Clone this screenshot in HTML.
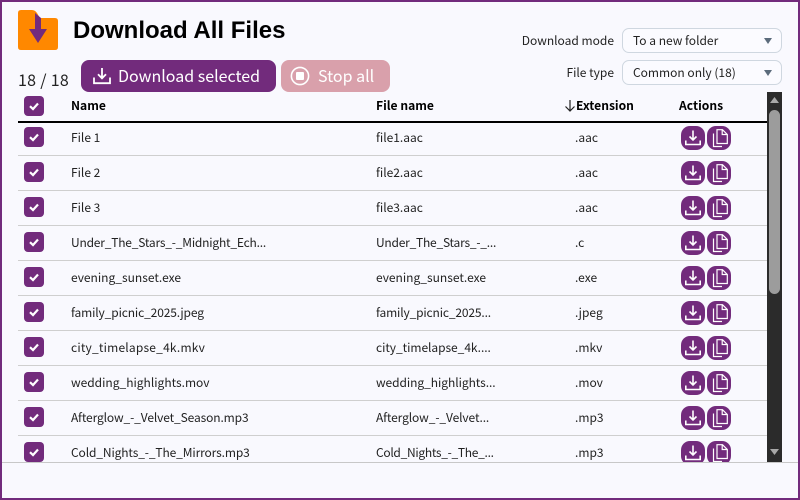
<!DOCTYPE html>
<html><head><meta charset="utf-8"><style>
html,body{margin:0;padding:0}
body{width:800px;height:500px;overflow:hidden;position:relative;background:#f9f9fe;font-family:"Noto Sans CJK JP","Liberation Sans",sans-serif;color:#1c1c1c}
.a{position:absolute;white-space:nowrap}
#frame{left:0;top:0;width:796px;height:496px;border:2px solid #722b7c;z-index:5;pointer-events:none}
h1{margin:0;left:73px;top:15px;font:bold 24px/32px "Liberation Sans",sans-serif;color:#000}
.btn{height:32px;border-radius:8px;color:#fff;font-size:16px;line-height:31px}
.lab{font-size:12px;line-height:18px;text-align:right;right:186px;color:#222}
.sel{left:622px;width:158px;height:23px;border:1px solid #cfd7e0;border-radius:7px;background:#fbfbff;font-size:12px;line-height:24px;color:#222;text-indent:10px}
.sel svg{position:absolute;left:141px;top:9px}
.th{top:97px;font-size:12.1px;font-weight:bold;line-height:18px;color:#000}
.cb{left:24px;width:20px;height:20px;border-radius:4px;background:#722b7c}
.cb svg{position:absolute;left:3px;top:3px}
#rows{left:18px;top:123px;width:749px;height:339px;overflow:hidden}
.r{position:absolute;left:0;width:749px;height:35px;border-bottom:1px solid #cfcfcf;font-size:12px;line-height:36px}
.r span{position:absolute;top:0;white-space:nowrap;color:#222}
.r .n{left:53px}.r .f{left:358px}.r .e{left:557px}
.r .cb{left:6px;top:7px}
.ib{position:absolute;top:6px;width:24px;height:24px;border-radius:9px;background:#722b7c}
.ib svg{position:absolute;left:0;top:0}
.d{left:663px}.c{left:689px}
</style></head><body>
<svg width="0" height="0" style="position:absolute"><defs>
<symbol id="ck" viewBox="0 0 14 14"><path d="M3 7.200 6 10 11 4.500" fill="none" stroke="#fff" stroke-width="2.200"/></symbol>
<symbol id="dl" viewBox="0 0 24 24"><path d="M12 4.500V14M8.500 10.500 12 14l3.500-3.500M4.800 14.500v4h14.400v-4" fill="none" stroke="#fff" stroke-width="1.600"/></symbol>
<symbol id="cp" viewBox="0 0 24 24"><path d="M10 3.700h5.500l4.800 4.800v9H10zM15.200 3.700v4.800h5M6.500 7.500v13h8.500" fill="none" stroke="#fff" stroke-width="1.200"/></symbol>
<symbol id="dlb" viewBox="0 0 18 18"><path d="M9 1V11M5 7.300 9 11.300l4-4M1 10.500v5.700h16v-5.700" fill="none" stroke="#fff" stroke-width="1.800"/></symbol>
</defs></svg>
<div class="a" id="frame"></div>

<svg class="a" style="left:18px;top:10px" width="40" height="40" viewBox="0 0 40 40"><path d="M3 0H14Q17 0 19 3L22 8H37Q40 8 40 11V37Q40 40 37 40H3Q0 40 0 37V3Q0 0 3 0Z" fill="#ff8800"/><path d="M17 3 23 8V19H29L20 33 11 19H17Z" fill="#722b7c"/></svg>
<h1 class="a">Download All Files</h1>

<div class="a" style="left:18px;top:68px;font-size:16px;line-height:22px;color:#222;letter-spacing:.3px">18 / 18</div>
<div class="a btn" style="left:81px;top:60px;width:195px;background:#722b7c"><svg class="a" style="left:12px;top:7px" width="18" height="18"><use href="#dlb"/></svg><span class="a" style="left:37px">Download selected</span></div>
<div class="a btn" style="left:281px;top:60px;width:109px;background:#d9a0ab"><svg class="a" style="left:9px;top:6px" width="20" height="20" viewBox="0 0 20 20"><circle cx="10" cy="10" r="8.600" fill="none" stroke="#fff" stroke-width="1.600"/><rect x="6" y="6" width="8" height="8" rx="1" fill="#fff"/></svg><span class="a" style="left:37px">Stop all</span></div>

<div class="a lab" style="top:32px">Download mode</div>
<div class="a sel" style="top:28px">To a new folder<svg width="8" height="6"><path d="M0 0H8L4 6Z" fill="#5b6b7b"/></svg></div>
<div class="a lab" style="top:64px">File type</div>
<div class="a sel" style="top:60px">Common only (18)<svg width="8" height="6"><path d="M0 0H8L4 6Z" fill="#5b6b7b"/></svg></div>

<div class="a cb" style="top:96px"><svg width="14" height="14"><use href="#ck"/></svg></div>
<div class="a th" style="left:71px">Name</div>
<div class="a th" style="left:376px">File name</div>
<svg class="a" style="left:564px;top:99px" width="12" height="13" viewBox="0 0 12 13"><path d="M6 1V12M1.500 7.500 6 12l4.500-4.500" fill="none" stroke="#222" stroke-width="1.200"/></svg>
<div class="a th" style="left:576px">Extension</div>
<div class="a th" style="left:679px">Actions</div>
<div class="a" style="left:18px;top:121px;width:749px;height:2px;background:#000"></div>

<div class="a" id="rows">
<div class="r" style="top:-3px"><div class="a cb"><svg width="14" height="14"><use href="#ck"/></svg></div><span class="n">File 1</span><span class="f">file1.aac</span><span class="e">.aac</span><div class="ib d"><svg width="24" height="24"><use href="#dl"/></svg></div><div class="ib c"><svg width="24" height="24"><use href="#cp"/></svg></div></div>
<div class="r" style="top:32px"><div class="a cb"><svg width="14" height="14"><use href="#ck"/></svg></div><span class="n">File 2</span><span class="f">file2.aac</span><span class="e">.aac</span><div class="ib d"><svg width="24" height="24"><use href="#dl"/></svg></div><div class="ib c"><svg width="24" height="24"><use href="#cp"/></svg></div></div>
<div class="r" style="top:67px"><div class="a cb"><svg width="14" height="14"><use href="#ck"/></svg></div><span class="n">File 3</span><span class="f">file3.aac</span><span class="e">.aac</span><div class="ib d"><svg width="24" height="24"><use href="#dl"/></svg></div><div class="ib c"><svg width="24" height="24"><use href="#cp"/></svg></div></div>
<div class="r" style="top:102px"><div class="a cb"><svg width="14" height="14"><use href="#ck"/></svg></div><span class="n" style="letter-spacing:-.2px">Under_The_Stars_-_Midnight_Ech...</span><span class="f" style="letter-spacing:-.23px">Under_The_Stars_-_...</span><span class="e">.c</span><div class="ib d"><svg width="24" height="24"><use href="#dl"/></svg></div><div class="ib c"><svg width="24" height="24"><use href="#cp"/></svg></div></div>
<div class="r" style="top:137px"><div class="a cb"><svg width="14" height="14"><use href="#ck"/></svg></div><span class="n">evening_sunset.exe</span><span class="f">evening_sunset.exe</span><span class="e">.exe</span><div class="ib d"><svg width="24" height="24"><use href="#dl"/></svg></div><div class="ib c"><svg width="24" height="24"><use href="#cp"/></svg></div></div>
<div class="r" style="top:172px"><div class="a cb"><svg width="14" height="14"><use href="#ck"/></svg></div><span class="n" style="letter-spacing:-.13px">family_picnic_2025.jpeg</span><span class="f" style="letter-spacing:-.15px">family_picnic_2025...</span><span class="e">.jpeg</span><div class="ib d"><svg width="24" height="24"><use href="#dl"/></svg></div><div class="ib c"><svg width="24" height="24"><use href="#cp"/></svg></div></div>
<div class="r" style="top:207px"><div class="a cb"><svg width="14" height="14"><use href="#ck"/></svg></div><span class="n" style="letter-spacing:.2px">city_timelapse_4k.mkv</span><span class="f" style="letter-spacing:-.05px">city_timelapse_4k....</span><span class="e">.mkv</span><div class="ib d"><svg width="24" height="24"><use href="#dl"/></svg></div><div class="ib c"><svg width="24" height="24"><use href="#cp"/></svg></div></div>
<div class="r" style="top:242px"><div class="a cb"><svg width="14" height="14"><use href="#ck"/></svg></div><span class="n">wedding_highlights.mov</span><span class="f" style="letter-spacing:-.05px">wedding_highlights...</span><span class="e">.mov</span><div class="ib d"><svg width="24" height="24"><use href="#dl"/></svg></div><div class="ib c"><svg width="24" height="24"><use href="#cp"/></svg></div></div>
<div class="r" style="top:277px"><div class="a cb"><svg width="14" height="14"><use href="#ck"/></svg></div><span class="n" style="letter-spacing:-.12px">Afterglow_-_Velvet_Season.mp3</span><span class="f" style="letter-spacing:-.1px">Afterglow_-_Velvet...</span><span class="e">.mp3</span><div class="ib d"><svg width="24" height="24"><use href="#dl"/></svg></div><div class="ib c"><svg width="24" height="24"><use href="#cp"/></svg></div></div>
<div class="r" style="top:312px"><div class="a cb"><svg width="14" height="14"><use href="#ck"/></svg></div><span class="n" style="letter-spacing:-.12px">Cold_Nights_-_The_Mirrors.mp3</span><span class="f" style="letter-spacing:-.3px">Cold_Nights_-_The_...</span><span class="e">.mp3</span><div class="ib d"><svg width="24" height="24"><use href="#dl"/></svg></div><div class="ib c"><svg width="24" height="24"><use href="#cp"/></svg></div></div>
</div>

<div class="a" style="left:2px;top:462px;width:796px;height:1px;background:#c8c8c8"></div>
<div class="a" style="left:767px;top:92px;width:15px;height:370px;background:#2b2b2b"></div>
<svg class="a" style="left:769px;top:97px" width="11" height="6"><path d="M1 6H10L5.500 0Z" fill="#a8a8a8"/></svg>
<div class="a" style="left:769px;top:110px;width:11px;height:184px;border-radius:6px;background:#9c9c9c"></div>
<svg class="a" style="left:769px;top:449px" width="11" height="6"><path d="M1 0H10L5.500 6Z" fill="#a8a8a8"/></svg>
</body></html>
